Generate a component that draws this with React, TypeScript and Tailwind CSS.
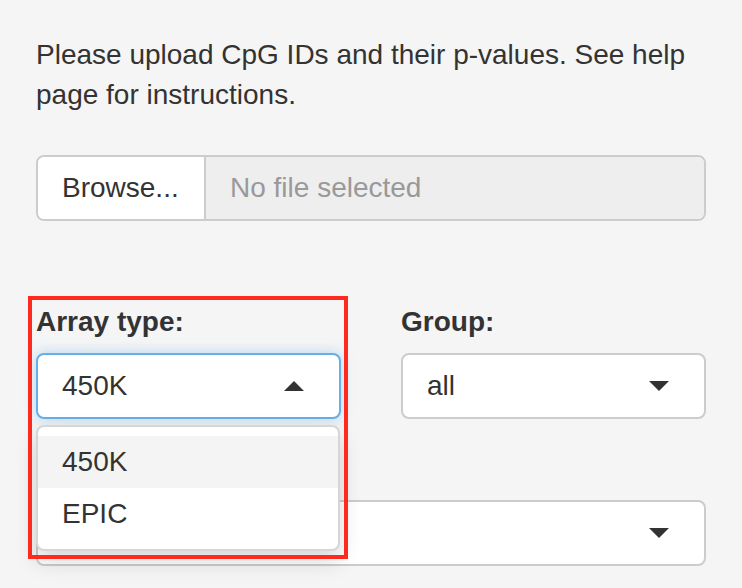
import React from 'react'

// ── Small triangle caret used by the select boxes ────────────────────────────
function Caret({ up = false }: { up?: boolean }) {
  return (
    <svg width="20" height="10" viewBox="0 0 20 10" className="shrink-0">
      {up ? <path d="M10 0 L20 10 L0 10 Z" fill="#333" /> : <path d="M0 0 L20 0 L10 10 Z" fill="#333" />}
    </svg>
  )
}

function SelectBox({ value, open = false }: { value: string; open?: boolean }) {
  const border = open
    ? 'border-[#66afe9] shadow-[0_0_14px_rgba(102,175,233,0.45)]'
    : 'border-[#cccccc]'
  return (
    <div className={`h-[66px] bg-white border-2 ${border} rounded-[8px] pl-[24px] pr-[35px] flex items-center justify-between`}>
      <span className="text-[28px] leading-[40px] text-[#333]">{value}</span>
      <Caret up={open} />
    </div>
  )
}

export default function App() {
  return (
    <div
      className="w-[742px] h-[588px] overflow-hidden bg-[#f5f5f5] px-[36px] pt-[35px] text-[#333]"
      style={{ fontFamily: '"Liberation Sans", Arial, sans-serif' }}
    >
      {/* Intro */}
      <p className="text-[28px] leading-[40px]">
        Please upload CpG IDs and their p-values. See help page for instructions.
      </p>

      {/* File input */}
      <div className="mt-[40px] h-[66px] flex border-2 border-[#cccccc] rounded-[8px] overflow-hidden">
        <div className="w-[168px] shrink-0 bg-white border-r-2 border-[#cccccc] flex items-center pl-[24px] text-[28px]">
          Browse...
        </div>
        <div className="flex-1 bg-[#eeeeee] flex items-center pl-[24px] text-[28px] text-[#999]">
          No file selected
        </div>
      </div>

      {/* Array type / Group */}
      <div className="mt-[81px] grid grid-cols-2 gap-x-[60px]">
        <div className="relative">
          <div className="text-[28px] leading-[40px] font-bold mb-[11px]">Array type:</div>
          <div className="relative">
            <SelectBox value="450K" open />
            {/* open dropdown */}
            <div className="absolute z-20 left-0 top-[calc(100%+6px)] w-[304px] bg-white border-2 border-[#d6d6d6] rounded-[8px] py-[9px] shadow-[0_10px_22px_rgba(0,0,0,0.16)]">
              <div className="h-[52px] bg-[#f4f4f4] pl-[24px] flex items-center text-[28px]">450K</div>
              <div className="h-[52px] pl-[24px] flex items-center text-[28px]">EPIC</div>
            </div>
          </div>
          {/* highlight box */}
          <div className="absolute z-30 left-[-8px] top-[-6px] w-[320px] h-[263px] border-[4px] border-[#ff2a1f] pointer-events-none" />
        </div>
        <div>
          <div className="text-[28px] leading-[40px] font-bold mb-[11px]">Group:</div>
          <SelectBox value="all" />
        </div>
      </div>

      {/* Third field (label hidden under dropdown) */}
      <div className="mt-[31px]">
        <div className="h-[40px] mb-[10px]" />
        <SelectBox value="" />
      </div>
    </div>
  )
}
